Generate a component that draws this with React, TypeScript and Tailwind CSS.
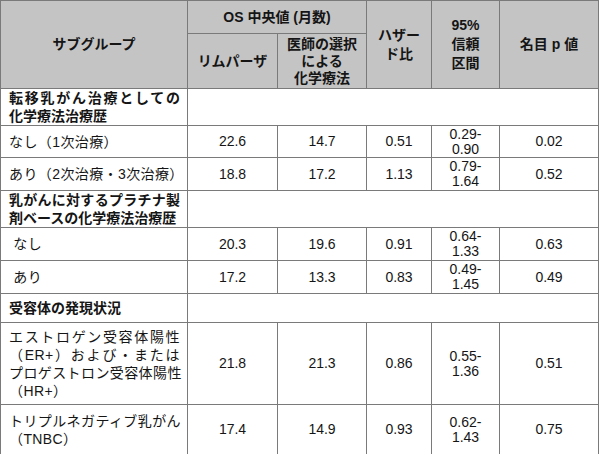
const font = "font-['Liberation_Sans','Noto_Sans_CJK_JP',sans-serif]";

type DataRow = {
  label: string[];
  justify?: boolean[];
  values: [string, string, string, [string, string], string];
  h: string;
};

type Section = { title: string[]; h: string; rows: DataRow[] };

const sections: Section[] = [
  {
    title: ["転移乳がん治療としての", "化学療法治療歴"],
    h: "h-[37px]",
    rows: [
      { label: ["なし（1次治療）"], values: ["22.6", "14.7", "0.51", ["0.29-", "0.90"], "0.02"], h: "h-[32px]" },
      { label: ["あり（2次治療・3次治療）"], values: ["18.8", "17.2", "1.13", ["0.79-", "1.64"], "0.52"], h: "h-[33px]" },
    ],
  },
  {
    title: ["乳がんに対するプラチナ製", "剤ベースの化学療法治療歴"],
    h: "h-[36px]",
    rows: [
      { label: ["\u00a0なし"], values: ["20.3", "19.6", "0.91", ["0.64-", "1.33"], "0.63"], h: "h-[33px]" },
      { label: ["\u00a0あり"], values: ["17.2", "13.3", "0.83", ["0.49-", "1.45"], "0.49"], h: "h-[33px]" },
    ],
  },
  {
    title: ["受容体の発現状況"],
    h: "h-[29px]",
    rows: [
      {
        label: ["エストロゲン受容体陽性", "（ER+）および・または", "プロゲストロン受容体陽性", "（HR+）"],
        justify: [true, true, false, false],
        values: ["21.8", "21.3", "0.86", ["0.55-", "1.36"], "0.51"],
        h: "h-[82px]",
      },
      {
        label: ["トリプルネガティブ乳がん", "（TNBC）"],
        values: ["17.4", "14.9", "0.93", ["0.62-", "1.43"], "0.75"],
        h: "h-[50px]",
      },
    ],
  },
];

const th = "border border-[#7a7a7a] bg-[#c4c4c4] font-bold text-center align-middle p-0";
const td = "border border-[#7a7a7a] text-center align-middle p-0";

export default function App() {
  return (
    <div className={`w-[600px] h-[454px] overflow-hidden bg-white text-[#151515] text-[14px] ${font}`}>
      <table className="table-fixed border-collapse w-[598px] border border-[#555]">
        <colgroup>
          <col className="w-[187px]" />
          <col className="w-[90px]" />
          <col className="w-[89px]" />
          <col className="w-[65px]" />
          <col className="w-[68px]" />
          <col className="w-[99px]" />
        </colgroup>
        <thead>
          <tr className="h-[33px]">
            <th rowSpan={2} className={th}>サブグループ</th>
            <th colSpan={2} className={th}>OS 中央値 (月数)</th>
            <th rowSpan={2} className={`${th} leading-[19px]`}>
              ハザー<br />ド比
            </th>
            <th rowSpan={2} className={`${th} leading-[19px]`}>
              95%<br />信頼<br />区間
            </th>
            <th rowSpan={2} className={th}>名目 p 値</th>
          </tr>
          <tr className="h-[55px]">
            <th className={th}>リムパーザ</th>
            <th className={`${th} leading-[17px]`}>
              医師の選択<br />による<br />化学療法
            </th>
          </tr>
        </thead>
        <tbody>
          {sections.map((s) => (
            <>
              <tr key={s.title[0]} className={s.h}>
                <td className="border border-[#7a7a7a] pl-[8px] pr-[7px] py-0 align-middle font-bold leading-[18px]">
                  {s.title.map((l, i) => (
                    <span
                      key={i}
                      className={`block whitespace-nowrap ${i === 0 && s.title.length > 1 ? "[text-align-last:justify]" : ""}`}
                    >
                      {l}
                    </span>
                  ))}
                </td>
                <td colSpan={5} className="border border-[#7a7a7a]" />
              </tr>
              {s.rows.map((r) => (
                <tr key={r.label[0]} className={r.h}>
                  <td className="border border-[#7a7a7a] pl-[8px] pr-[7px] py-0 align-middle leading-[18px] tracking-[0.4px]">
                    {r.label.map((l, i) => (
                      <span
                        key={i}
                        className={`block whitespace-nowrap ${r.justify?.[i] ? "[text-align-last:justify]" : ""}`}
                      >
                        {l}
                      </span>
                    ))}
                  </td>
                  <td className={td}>{r.values[0]}</td>
                  <td className={td}>{r.values[1]}</td>
                  <td className={td}>{r.values[2]}</td>
                  <td className={`${td} leading-[15px]`}>
                    {r.values[3][0]}
                    <br />
                    {r.values[3][1]}
                  </td>
                  <td className={td}>{r.values[4]}</td>
                </tr>
              ))}
            </>
          ))}
        </tbody>
      </table>
    </div>
  );
}
